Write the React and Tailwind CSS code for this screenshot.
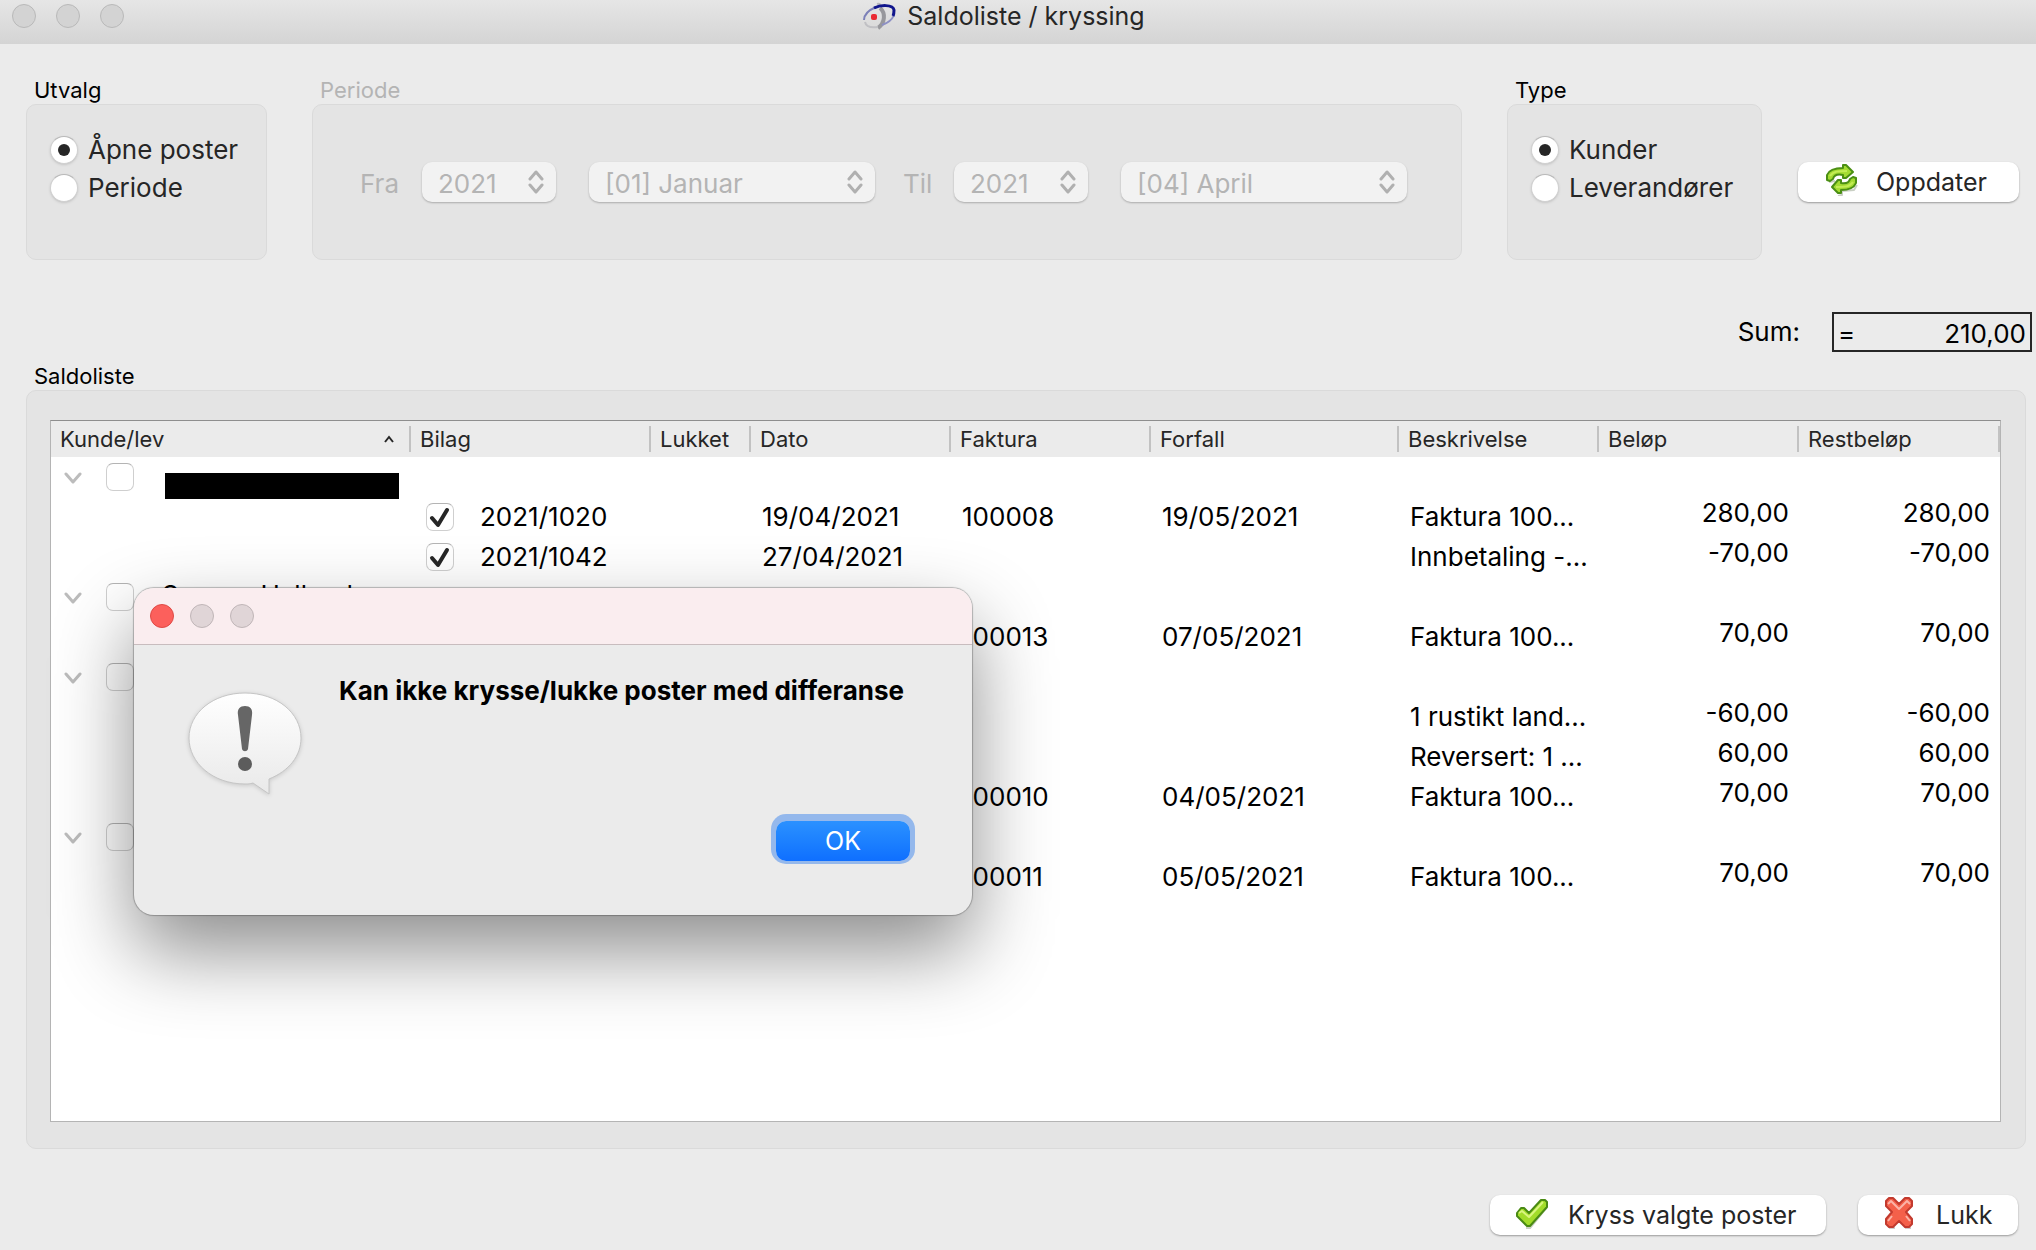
import React, { useState } from "react";

const COLUMNS = [
  { label: "Kunde/lev", width: "w-[360px]", sorted: true },
  { label: "Bilag", width: "w-[240px]" },
  { label: "Lukket", width: "w-[100px]" },
  { label: "Dato", width: "w-[200px]" },
  { label: "Faktura", width: "w-[200px]" },
  { label: "Forfall", width: "w-[248px]" },
  { label: "Beskrivelse", width: "w-[200px]" },
  { label: "Beløp", width: "w-[200px]" },
  { label: "Restbeløp", width: "" },
];

const ROWS = [
  { id: 1, group: true, hidden: true },
  { id: 2, bilag: "2021/1020", dato: "19/04/2021", faktura: "100008", forfall: "19/05/2021", tekst: "Faktura 100...", belop: "280,00" },
  { id: 3, bilag: "2021/1042", dato: "27/04/2021", tekst: "Innbetaling -...", belop: "-70,00" },
  { id: 4, group: true, name: "Susann Halland" },
  { id: 5, faktura: "100013", forfall: "07/05/2021", tekst: "Faktura 100...", belop: "70,00" },
  { id: 6, group: true },
  { id: 7, tekst: "1 rustikt land...", belop: "-60,00" },
  { id: 8, tekst: "Reversert: 1 ...", belop: "60,00" },
  { id: 9, faktura: "100010", forfall: "04/05/2021", tekst: "Faktura 100...", belop: "70,00" },
  { id: 10, group: true },
  { id: 11, faktura: "100011", forfall: "05/05/2021", tekst: "Faktura 100...", belop: "70,00" },
];

const LogoIcon = () => (
  <svg viewBox="0 0 34 28" className="w-[34px] h-7" fill="none">
    <path d="M14 2c3-1 4 1 4 3" stroke="#b9b9bd" strokeWidth="2" />
    <path d="M17 6c6 5 5 15-2 20" stroke="#98989c" strokeWidth="4" />
    <path d="M2 20c1 5 6 6 13 5" stroke="#c0c0c4" strokeWidth="2" />
    <path d="M1 18C1 12 6 8 13 5" stroke="#7c80b8" strokeWidth="2" />
    <path d="M31 13c-2 5-6 8-12 10" stroke="#8d90c4" strokeWidth="2" />
    <path d="M11 6C17 3 30 2 31 8c0 2 0 4-1 6" stroke="#10158c" strokeWidth="3" />
    <rect x="8" y="12" width="6" height="6" rx="2" fill="#ea2a33" />
  </svg>
);

const RefreshIcon = () => (
  <svg viewBox="0 0 32 32" className="w-8 h-8 mb-1" strokeLinejoin="round">
    <path d="M3 18l6-1M12 32l4-1v-4l12-1 3-5" fill="none" stroke="#c9cfc4" strokeWidth="2" />
    <g stroke="#4b8f14" strokeWidth="2">
      <path d="M1 16V11C3 6 8 4 17 4V1l3 0 7 7-7 6h-3v-3c-5-1-9 0-10 4l-3 2z" fill="#a4dc32" />
      <path d="M30 14v5c-2 5-7 7-15 7v3h-3l-6-6 6-7h3v3c5 1 8 0 9-4l3-2z" fill="#a4dc32" />
    </g>
    <path d="M4 12c3-5 9-5 17-5M27 18c-3 5-9 5-17 5" fill="none" stroke="#c3ec55" strokeWidth="2" />
  </svg>
);

const CheckIcon = () => (
  <svg viewBox="0 0 32 32" className="w-8 h-8 mb-1" strokeLinejoin="round">
    <path d="M10 31h4L31 10" fill="none" stroke="#c9cfc4" strokeWidth="2" />
    <path d="M1 16l4-5h3l5 5L25 3h4l2 2v5L14 29h-3L1 19z" fill="#a2dc2a" stroke="#4a8a14" strokeWidth="2" />
    <path d="M3 16l3-2 7 6L27 5" fill="none" stroke="#d9f580" strokeWidth="2" />
  </svg>
);

const CrossIcon = () => (
  <svg viewBox="0 0 32 32" className="w-8 h-8 mb-1" strokeLinejoin="round">
    <path d="M5 31h6M21 31h6" fill="none" stroke="#cfcaca" strokeWidth="2" />
    <path
      d="M2 4l3-3h4l6 6 6-6h4l3 3v5l-6 6 6 7v5l-3 3h-4l-6-6-6 6H5l-3-3v-5l6-7-6-6z"
      fill="#f4604a"
      stroke="#c23a2e"
      strokeWidth="2"
    />
    <path d="M4 7l3-3 8 8 8-8 3 3M4 24l4-5M22 19l4 5" fill="none" stroke="#fbb4a8" strokeWidth="2" />
  </svg>
);

const WarningBubble = () => (
  <svg viewBox="0 0 116 108" className="w-[116px] h-[108px] drop-shadow-sm">
    <defs>
      <linearGradient id="bubble" x1="0" y1="0" x2="0" y2="1">
        <stop offset="0" stopColor="#ffffff" />
        <stop offset="1" stopColor="#e9e9e9" />
      </linearGradient>
    </defs>
    <path
      d="M58 2C90 2 114 22 114 47c0 18-12 33-32 41v15L66 92c-3 1-5 1-8 1C26 93 2 72 2 47S26 2 58 2z"
      fill="url(#bubble)"
      stroke="#c4c4c4"
    />
    <path d="M58 15c5 0 8 3 7 9l-4 34c-1 3-5 3-6 0l-4-34c-1-6 2-9 7-9z" fill="#666666" />
    <circle cx="58" cy="73" r="7" fill="#5c5c5c" />
  </svg>
);

const GroupBox = ({ title, disabled, className, children }) => (
  <fieldset disabled={disabled} className={className}>
    <legend className={`ml-2 text-[22px] leading-7 ${disabled ? "text-[#b4b4b4]" : "text-black"}`}>
      {title}
    </legend>
    {children}
  </fieldset>
);

const Radio = ({ name, label, checked, onChange }) => (
  <label className="flex items-center gap-[10px] h-[38px]">
    <input
      type="radio"
      name={name}
      checked={checked}
      onChange={onChange}
      className="appearance-none grid place-items-center w-7 h-7 rounded-full bg-white border border-[#d0d0d0] border-t-[#b8b8b8] shadow-sm checked:before:block checked:before:w-3 checked:before:h-3 checked:before:rounded-full checked:before:bg-[#262626]"
    />
    {label}
  </label>
);

const Checkbox = ({ label, checked, onChange }) => (
  <span className="grid w-7 h-7 shrink-0">
    <input
      type="checkbox"
      aria-label={label}
      checked={checked}
      onChange={onChange}
      className="col-start-1 row-start-1 appearance-none w-7 h-7 rounded-[7px] bg-white border border-[#cfcfcf] border-t-[#b4b4b4]"
    />
    {checked && (
      <svg viewBox="0 0 28 28" className="col-start-1 row-start-1 w-7 h-7 pointer-events-none" fill="none">
        <path d="M6 15l6 7L21 7" stroke="#262626" strokeWidth="4" strokeLinecap="round" strokeLinejoin="round" />
      </svg>
    )}
  </span>
);

const Select = ({ label, options, className }) => (
  <span className={`grid h-10 ${className}`}>
    <select
      aria-label={label}
      className="col-start-1 row-start-1 appearance-none w-full h-10 pt-1 pl-4 rounded-[10px] bg-[#f2f2f2] text-[#b4b4b4] shadow-[0_1px_2px_rgba(0,0,0,0.25)] disabled:opacity-100"
    >
      {options.map((option) => (
        <option key={option}>{option}</option>
      ))}
    </select>
    <svg viewBox="0 0 16 24" className="col-start-1 row-start-1 justify-self-end self-center mr-3 w-4 h-6 pointer-events-none" fill="none">
      <path d="M2 9l6-7 6 7M2 15l6 7 6-7" stroke="#b0b0b0" strokeWidth="3" strokeLinecap="round" strokeLinejoin="round" />
    </svg>
  </span>
);

const Button = ({ icon, children, className }) => (
  <button
    type="button"
    className={`flex items-center h-10 rounded-[10px] bg-white text-[25px] shadow-[0_1px_2px_rgba(0,0,0,0.35)] ${className}`}
  >
    {icon}
    {children}
  </button>
);

const TreeRow = ({ row, checked, onToggle }) => {
  if (row.group) {
    return (
      <tr className="h-10">
        <td className="p-0 align-top">
          <div className="flex h-10 pl-[13px] pt-[6px]">
            <svg viewBox="0 0 18 28" className="w-[18px] h-7 mr-6" fill="none">
              <path d="M2 11l7 8 7-8" stroke="#bcbcbc" strokeWidth="3" strokeLinecap="round" strokeLinejoin="round" />
            </svg>
            <Checkbox label={`Velg ${row.name || "kunde"}`} checked={checked} onChange={onToggle} />
            {row.hidden && <span className="mt-[10px] ml-[31px] w-[234px] h-[26px] shrink-0 bg-black" />}
            {row.name && <span className="ml-7 leading-6">{row.name}</span>}
          </div>
        </td>
        <td colSpan={8} />
      </tr>
    );
  }

  return (
    <tr className="h-10">
      <td />
      <td className="p-0">
        {row.bilag && (
          <div className="flex items-center gap-[26px] pl-[15px]">
            <Checkbox label={row.bilag} checked={checked} onChange={onToggle} />
            {row.bilag}
          </div>
        )}
      </td>
      <td />
      <td className="py-0 px-[11px]">{row.dato}</td>
      <td className="py-0 px-[11px]">{row.faktura}</td>
      <td className="py-0 px-[11px]">{row.forfall}</td>
      <td className="py-0 pl-[11px] whitespace-nowrap">{row.tekst}</td>
      <td className="pt-0 pb-2 px-[10px] text-right">{row.belop}</td>
      <td className="pt-0 pb-2 px-[10px] text-right">{row.belop}</td>
    </tr>
  );
};

const MessageDialog = ({ onClose }) => (
  <div
    role="alertdialog"
    aria-labelledby="dialog-message"
    className="absolute left-[134px] top-[588px] w-[838px] rounded-[20px] overflow-hidden bg-[#ebebeb] shadow-[0_0_1px_1px_rgba(0,0,0,0.25),0_36px_80px_rgba(0,0,0,0.45)]"
  >
    <div className="flex items-center gap-4 h-[57px] px-4 bg-[#faedef] border-b border-[#c8bcbe]">
      <button type="button" aria-label="Lukk dialog" onClick={onClose} className="w-6 h-6 rounded-full bg-[#fc605c] border border-[#de4a46]" />
      <span className="w-6 h-6 rounded-full bg-[#e0d5d7] border border-[#bfb5b7]" />
      <span className="w-6 h-6 rounded-full bg-[#e0d5d7] border border-[#bfb5b7]" />
    </div>
    <div className="flex px-[53px] pt-[30px]">
      <div className="pt-4">
        <WarningBubble />
      </div>
      <p id="dialog-message" className="ml-9 font-bold text-black">
        Kan ikke krysse/lukke poster med differanse
      </p>
    </div>
    <div className="flex justify-end pt-[22px] pb-[54px] pr-[62px]">
      <button
        type="button"
        onClick={onClose}
        className="w-[134px] h-10 rounded-[10px] bg-linear-to-b from-[#2b91ff] to-[#0f6fff] text-[25px] text-white shadow-[0_-2px_0_5px_#94b8ec]"
      >
        OK
      </button>
    </div>
  </div>
);

export default function App() {
  const [utvalg, setUtvalg] = useState("apne");
  const [type, setType] = useState("kunder");
  const [open, setOpen] = useState(true);
  const [selected, setSelected] = useState([2, 3]);

  const toggle = (id) =>
    setSelected(selected.includes(id) ? selected.filter((s) => s !== id) : [...selected, id]);

  return (
    <div className="relative flex flex-col min-h-screen bg-[#ebebeb] font-['Inter',sans-serif] text-[26px] leading-8 text-[#262626]">
      {/* Title bar */}
      <header className="grid grid-cols-[1fr_auto_1fr] h-11 pb-3 px-3 items-center bg-linear-to-b from-[#e6e6e6] to-[#d4d4d4]">
        <div className="flex gap-5">
          <span className="w-6 h-6 rounded-full bg-[#d3d3d3] border border-[#b9b9b9]" />
          <span className="w-6 h-6 rounded-full bg-[#d3d3d3] border border-[#b9b9b9]" />
          <span className="w-6 h-6 rounded-full bg-[#d3d3d3] border border-[#b9b9b9]" />
        </div>
        <h1 className="flex items-center gap-[10px] pr-7 text-[25px]">
          <LogoIcon />
          Saldoliste / kryssing
        </h1>
      </header>

      {/* Filters */}
      <section className="flex pl-[26px] pr-[17px] pt-8">
        <GroupBox title="Utvalg" className="w-[241px]">
          <div className="h-[156px] pl-[23px] pt-[26px] rounded-[10px] bg-[#e4e4e4] border border-[#dadada]">
            <Radio name="utvalg" label="Åpne poster" checked={utvalg === "apne"} onChange={() => setUtvalg("apne")} />
            <Radio name="utvalg" label="Periode" checked={utvalg === "periode"} onChange={() => setUtvalg("periode")} />
          </div>
        </GroupBox>

        <GroupBox title="Periode" disabled className="ml-[45px] flex-1">
          <div className="flex items-center h-[156px] pl-[47px] rounded-[10px] bg-[#e4e4e4] border border-[#dadada] text-[#b4b4b4]">
            <span className="w-[62px] pt-1">Fra</span>
            <Select label="Fra år" options={["2021"]} className="w-[134px] mr-[33px]" />
            <Select label="Fra måned" options={["[01] Januar"]} className="w-[286px] mr-7" />
            <span className="w-[51px] pt-1">Til</span>
            <Select label="Til år" options={["2021"]} className="w-[134px] mr-[33px]" />
            <Select label="Til måned" options={["[04] April"]} className="w-[286px]" />
          </div>
        </GroupBox>

        <GroupBox title="Type" className="ml-[45px] w-[255px]">
          <div className="h-[156px] pl-[23px] pt-[26px] rounded-[10px] bg-[#e4e4e4] border border-[#dadada]">
            <Radio name="type" label="Kunder" checked={type === "kunder"} onChange={() => setType("kunder")} />
            <Radio name="type" label="Leverandører" checked={type === "leverandorer"} onChange={() => setType("leverandorer")} />
          </div>
        </GroupBox>

        <div className="ml-9 pt-[86px]">
          <Button icon={<RefreshIcon />} className="w-[221px] pl-7 gap-[18px]">
            Oppdater
          </Button>
        </div>
      </section>

      {/* Sum */}
      <div className="flex items-center justify-end mt-[52px] pr-1 text-black">
        <label htmlFor="sum" className="mr-8">Sum:</label>
        <div className="flex items-center w-[200px] h-10 pt-1 px-1 border-2 border-[#262626]">
          <span>=</span>
          <output id="sum" className="flex-1 text-right">210,00</output>
        </div>
      </div>

      {/* Balance list */}
      <GroupBox title="Saldoliste" className="mt-[10px] ml-[26px] mr-[10px]">
        <div className="h-[759px] pt-[29px] pl-[23px] pr-6 pb-[26px] rounded-[10px] bg-[#e4e4e4] border border-[#dadada]">
          <div className="h-full bg-white border border-[#b4b4b4] border-t-[#8e8e8e] overflow-hidden">
            <table className="w-full table-fixed border-collapse text-black">
              <thead className="bg-[#ebebeb] text-[22px] leading-6 text-[#262626]">
                <tr className="h-9">
                  {COLUMNS.map((column) => (
                    <th key={column.label} className={`p-0 font-normal text-left ${column.width}`}>
                      <div className="flex items-center justify-between h-[26px] pl-[9px] pr-[14px] border-r-2 border-[#c2c2c2]">
                        {column.label}
                        {column.sorted && (
                          <svg viewBox="0 0 12 10" className="w-3 h-[10px]" fill="none">
                            <path d="M2 8l4-5 4 5" stroke="#262626" strokeWidth="2" />
                          </svg>
                        )}
                      </div>
                    </th>
                  ))}
                </tr>
              </thead>
              <tbody>
                {ROWS.map((row) => (
                  <TreeRow key={row.id} row={row} checked={selected.includes(row.id)} onToggle={() => toggle(row.id)} />
                ))}
              </tbody>
            </table>
          </div>
        </div>
      </GroupBox>

      {/* Actions */}
      <footer className="flex justify-end gap-8 pt-[46px] pb-3 pr-[18px]">
        <Button icon={<CheckIcon />} className="w-[336px] pl-[26px] gap-5">
          Kryss valgte poster
        </Button>
        <Button icon={<CrossIcon />} className="w-[160px] pl-[26px] gap-5">
          Lukk
        </Button>
      </footer>

      {open && <MessageDialog onClose={() => setOpen(false)} />}
    </div>
  );
}
